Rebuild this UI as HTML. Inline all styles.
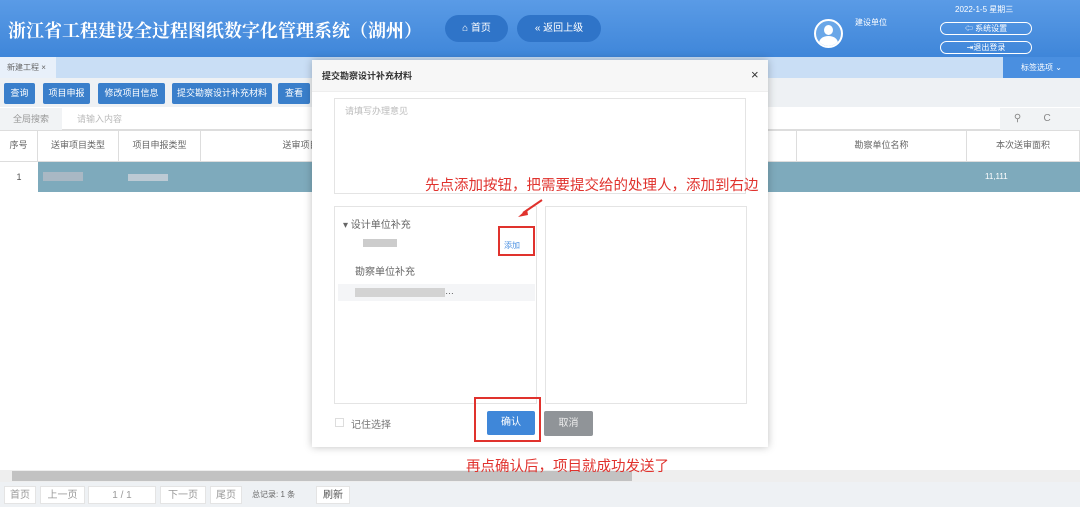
<!DOCTYPE html><html><head><meta charset="utf-8"><style>
*{margin:0;padding:0;box-sizing:border-box}
body{width:1080px;height:507px;overflow:hidden;position:relative;background:#fff;font-family:"Liberation Sans","Noto Sans CJK SC",sans-serif;font-size:10px;color:#555}
.a{position:absolute}
.hdr{left:0;top:0;width:1080px;height:57px;background:linear-gradient(180deg,#5a9be6,#3f86d9)}
.btn{background:#3a7fcb;color:#fff;font-size:9px;text-align:center;line-height:21px;border-radius:2px}
.th{border-right:1px solid #ddd;height:31px;line-height:31px;text-align:center;font-size:9px;color:#666}
.pg{background:#fff;border:1px solid #e4e4e4;height:18px;line-height:18px;text-align:center;color:#999;font-size:10px}
.red{color:#e0322d;font-size:14.5px;white-space:nowrap}
.box{border:2px solid #e0322d}
</style></head><body>
<div class="a hdr"></div>
<div class="a" style="left:8px;top:17px;font-family:'Noto Serif CJK SC',serif;font-weight:bold;font-size:18px;color:#fff;white-space:nowrap">浙江省工程建设全过程图纸数字化管理系统（湖州）</div>
<div class="a" style="left:445px;top:15px;width:63px;height:27px;border-radius:14px;background:#2f74c8;color:#fff;font-size:10px;line-height:27px;text-align:center">⌂ 首页</div>
<div class="a" style="left:517px;top:15px;width:84px;height:27px;border-radius:14px;background:#2f74c8;color:#fff;font-size:10px;line-height:27px;text-align:center">« 返回上级</div>
<div class="a" style="left:814px;top:19px;width:29px;height:29px;border-radius:50%;border:2px solid #fff;background:#6aa7e8;overflow:hidden"><div class="a" style="left:8px;top:4px;width:9px;height:10px;border-radius:50%;background:#fff"></div><div class="a" style="left:3px;top:15px;width:19px;height:14px;border-radius:50% 50% 0 0;background:#fff"></div></div>
<div class="a" style="left:855px;top:17px;color:#fff;font-size:8px">建设单位</div>
<div class="a" style="left:955px;top:4px;color:#fff;font-size:8px">2022-1-5 星期三</div>
<div class="a" style="left:940px;top:22px;width:92px;height:13px;border:1px solid #fff;border-radius:7px;color:#fff;font-size:8px;text-align:center;line-height:11px">⇦ 系统设置</div>
<div class="a" style="left:940px;top:41px;width:92px;height:13px;border:1px solid #fff;border-radius:7px;color:#fff;font-size:8px;text-align:center;line-height:11px">⇥退出登录</div>
<div class="a" style="left:0;top:57px;width:1080px;height:21px;background:#c9def5"></div>
<div class="a" style="left:0;top:57px;width:56px;height:21px;background:#e8f0fa;font-size:8px;line-height:21px;padding-left:7px;color:#666">新建工程 ×</div>
<div class="a" style="left:1003px;top:57px;width:77px;height:21px;background:#4a8fe0;color:#fff;font-size:8px;line-height:21px;text-align:center">标签选项 ⌄</div>
<div class="a" style="left:0;top:78px;width:1080px;height:29px;background:#eef1f4"></div>
<div class="a btn" style="left:4px;top:83px;width:31px">查询</div>
<div class="a btn" style="left:43px;top:83px;width:47px">项目申报</div>
<div class="a btn" style="left:98px;top:83px;width:67px">修改项目信息</div>
<div class="a btn" style="left:172px;top:83px;width:100px">提交勘察设计补充材料</div>
<div class="a btn" style="left:278px;top:83px;width:32px">查看</div>
<div class="a" style="left:0;top:107px;width:1080px;height:23px;border-bottom:1px solid #ddd"></div>
<div class="a" style="left:0;top:108px;width:62px;height:22px;background:#f1f3f5;color:#999;line-height:22px;text-align:center;font-size:9px">全局搜索</div>
<div class="a" style="left:77px;top:108px;line-height:22px;color:#bbb;font-size:9px">请输入内容</div>
<div class="a" style="left:1000px;top:108px;width:80px;height:22px;background:#f1f3f5;color:#888;font-size:10px;line-height:22px">&nbsp;&nbsp;&nbsp;&nbsp;&nbsp;⚲&nbsp;&nbsp;&nbsp;&nbsp;&nbsp;&nbsp;&nbsp;&nbsp;C</div>
<div class="a" style="left:0;top:130px;width:1080px;height:32px;border-bottom:1px solid #ddd;border-top:1px solid #ddd"></div>
<div class="a th" style="left:0;top:130px;width:38px">序号</div>
<div class="a th" style="left:38px;top:130px;width:81px">送审项目类型</div>
<div class="a th" style="left:119px;top:130px;width:82px">项目申报类型</div>
<div class="a th" style="left:201px;top:130px;width:200px">送审项目</div>
<div class="a th" style="left:770px;top:130px;width:27px"></div>
<div class="a th" style="left:797px;top:130px;width:170px">勘察单位名称</div>
<div class="a th" style="left:967px;top:130px;width:113px">本次送审面积</div>
<div class="a" style="left:38px;top:162px;width:1042px;height:30px;background:#7eaabc"></div>
<div class="a" style="left:0;top:162px;width:38px;height:30px;line-height:30px;text-align:center;font-size:9px">1</div>
<div class="a" style="left:43px;top:172px;width:40px;height:9px;background:#a9b8c4"></div>
<div class="a" style="left:128px;top:174px;width:40px;height:7px;background:#bccad4"></div>
<div class="a" style="left:985px;top:162px;line-height:30px;color:#fff;font-size:8px">11,111</div>
<div class="a" style="left:0;top:470px;width:1080px;height:12px;background:#eee"></div>
<div class="a" style="left:12px;top:471px;width:620px;height:10px;background:#c2c2c2"></div>
<div class="a" style="left:0;top:482px;width:1080px;height:25px;background:#eef1f4"></div>
<div class="a pg" style="left:4px;top:486px;width:32px">首页</div>
<div class="a pg" style="left:40px;top:486px;width:45px">上一页</div>
<div class="a pg" style="left:88px;top:486px;width:68px">1 / 1</div>
<div class="a pg" style="left:160px;top:486px;width:46px">下一页</div>
<div class="a pg" style="left:210px;top:486px;width:32px">尾页</div>
<div class="a" style="left:252px;top:486px;line-height:18px;font-size:8px;color:#666">总记录: 1 条</div>
<div class="a pg" style="left:316px;top:486px;width:34px;color:#555">刷新</div>
<div class="a" style="left:312px;top:60px;width:456px;height:387px;background:#fff;box-shadow:0 0 8px rgba(0,0,0,.25)"></div>
<div class="a" style="left:312px;top:60px;width:456px;height:32px;background:#f7f7f7;border-bottom:1px solid #eee;font-weight:bold;color:#333;font-size:9px;line-height:32px;padding-left:10px">提交勘察设计补充材料</div>
<div class="a" style="left:751px;top:67px;font-size:13px;color:#333">×</div>
<div class="a" style="left:334px;top:98px;width:412px;height:96px;border:1px solid #e4e4e4;color:#bbb;font-size:9px;padding:5px 10px">请填写办理意见</div>
<div class="a red" style="left:425px;top:174px">先点添加按钮，把需要提交给的处理人，添加到右边</div>
<div class="a" style="left:334px;top:206px;width:203px;height:198px;border:1px solid #e4e4e4"></div>
<div class="a" style="left:545px;top:206px;width:202px;height:198px;border:1px solid #e4e4e4"></div>
<div class="a" style="left:343px;top:216px;font-size:10px;color:#666">▾ 设计单位补充</div>
<div class="a" style="left:363px;top:239px;width:34px;height:8px;background:#ccc"></div>
<div class="a" style="left:355px;top:263px;font-size:10px;color:#666">勘察单位补充</div>
<div class="a" style="left:338px;top:284px;width:197px;height:17px;background:#f4f5f7"></div>
<div class="a" style="left:355px;top:288px;width:90px;height:9px;background:#d3d3d3"></div>
<div class="a" style="left:445px;top:286px;font-size:9px">…</div>
<div class="a" style="left:504px;top:240px;color:#4a90e2;font-size:8px">添加</div>
<div class="a box" style="left:498px;top:226px;width:37px;height:30px"></div>
<svg class="a" style="left:515px;top:198px" width="30" height="22"><path d="M27 2 L8 15" stroke="#e0322d" stroke-width="2"/><path d="M3 19 L12 11 L13 17Z" fill="#e0322d"/></svg>
<div class="a" style="left:335px;top:418px;width:9px;height:9px;border:1px solid #ddd"></div>
<div class="a" style="left:351px;top:416px;font-size:10px;color:#777">记住选择</div>
<div class="a" style="left:487px;top:411px;width:48px;height:24px;background:#3f87d9;color:#fff;border-radius:2px;line-height:24px;text-align:center;font-size:10px">确认</div>
<div class="a" style="left:544px;top:411px;width:49px;height:25px;background:#909498;color:#eee;border-radius:2px;line-height:25px;text-align:center;font-size:10px">取消</div>
<div class="a box" style="left:474px;top:397px;width:67px;height:45px"></div>
<div class="a red" style="left:466px;top:455px">再点确认后，项目就成功发送了</div>
</body></html>
